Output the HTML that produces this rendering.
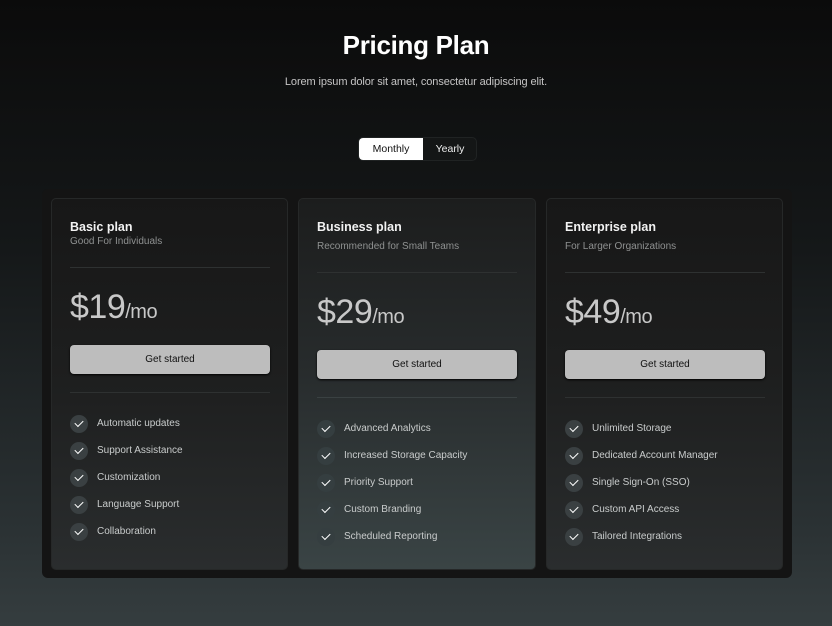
<!DOCTYPE html>
<html><head><meta charset="utf-8"><style>
*{margin:0;padding:0;box-sizing:border-box}
body{width:832px;height:626px;overflow:hidden;font-family:"Liberation Sans",sans-serif;background:linear-gradient(180deg,#0b0b0b 0%,#151819 40%,#2b3234 85%,#353d3f 100%);position:relative;color:#ddd}
.a{position:absolute;white-space:nowrap}
h1{position:absolute;top:30px;left:0;width:832px;text-align:center;font-size:26px;font-weight:bold;color:#fff;letter-spacing:-0.3px}
.sub{top:76px;left:0;width:832px;text-align:center;font-size:11px;color:#c4c4c4;letter-spacing:-0.1px}
.tog{left:358px;top:137px;width:119px;height:24px;border-radius:5px;background:#141616;border:1px solid #202323}
.tog .m{position:absolute;left:0;top:0;width:64px;height:22px;background:#fff;border-radius:4px 0 0 4px;color:#111;font-size:10.5px;text-align:center;line-height:22px}
.tog .y{position:absolute;left:64px;top:0;width:54px;height:22px;color:#eee;font-size:10.5px;text-align:center;line-height:22px}
.outer{left:42px;top:189px;width:750px;height:389px;background:#141414;border-radius:6px}
.card{position:absolute;top:198px;height:372px;border-radius:5px;border:1px solid #262828}
.c1{left:51px;width:237px;background:linear-gradient(180deg,#171717 0%,#1e1f1f 50%,#2a2d2e 100%)}
.c2{left:298px;width:238px;background:linear-gradient(180deg,#1c1d1d 0%,#272b2c 45%,#3a4445 100%)}
.c3{left:546px;width:237px;background:linear-gradient(180deg,#171717 0%,#1e1f1f 50%,#2a2d2e 100%)}
.t{left:18px;font-size:12.5px;font-weight:bold;color:#f2f2f2}
.s{left:18px;font-size:10px;color:#8f9191}
.hr{left:18px;width:200px;height:1px;background:#2e3131}
.p{left:18px;font-size:34px;color:#c8c8c8;letter-spacing:-0.5px}
.p span{font-size:20px}
.b{left:18px;width:200px;height:29px;background:#bdbdbd;border-radius:4px;color:#111;font-size:10px;text-align:center;line-height:29px;box-shadow:0 1px 2px #000}
.li{left:18px;font-size:10px;color:#c9cccc;height:18px;line-height:18px}
.li i{position:absolute;left:0;top:0;width:18px;height:18px;border-radius:50%;background:#3a4042}
.c2 .li i{background:#353e40}
.li i:after{content:"";position:absolute;left:5px;top:5px;width:7px;height:4px;border-left:1.5px solid #fff;border-bottom:1.5px solid #fff;transform:rotate(-45deg)}
.li b{font-weight:normal;position:absolute;left:27px;top:0}
</style></head><body>
<h1>Pricing Plan</h1>
<div class="a sub">Lorem ipsum dolor sit amet, consectetur adipiscing elit.</div>
<div class="a tog"><div class="m">Monthly</div><div class="y">Yearly</div></div>
<div class="a outer"></div>

<div class="card c1">
<div class="a t" style="top:21px">Basic plan</div>
<div class="a s" style="top:37px">Good For Individuals</div>
<div class="a hr" style="top:68px"></div>
<div class="a p" style="top:89px">$19<span>/mo</span></div>
<div class="a b" style="top:146px">Get started</div>
<div class="a hr" style="top:193px"></div>
<div class="a li" style="top:216px"><i></i><b>Automatic updates</b></div>
<div class="a li" style="top:243px"><i></i><b>Support Assistance</b></div>
<div class="a li" style="top:270px"><i></i><b>Customization</b></div>
<div class="a li" style="top:297px"><i></i><b>Language Support</b></div>
<div class="a li" style="top:324px"><i></i><b>Collaboration</b></div>
</div>

<div class="card c2">
<div class="a t" style="top:21px">Business plan</div>
<div class="a s" style="top:42px">Recommended for Small Teams</div>
<div class="a hr" style="top:73px"></div>
<div class="a p" style="top:94px">$29<span>/mo</span></div>
<div class="a b" style="top:151px">Get started</div>
<div class="a hr" style="top:198px;background:#3a4142"></div>
<div class="a li" style="top:221px"><i></i><b>Advanced Analytics</b></div>
<div class="a li" style="top:248px"><i></i><b>Increased Storage Capacity</b></div>
<div class="a li" style="top:275px"><i></i><b>Priority Support</b></div>
<div class="a li" style="top:302px"><i></i><b>Custom Branding</b></div>
<div class="a li" style="top:329px"><i></i><b>Scheduled Reporting</b></div>
</div>

<div class="card c3">
<div class="a t" style="top:21px">Enterprise plan</div>
<div class="a s" style="top:42px">For Larger Organizations</div>
<div class="a hr" style="top:73px"></div>
<div class="a p" style="top:94px">$49<span>/mo</span></div>
<div class="a b" style="top:151px">Get started</div>
<div class="a hr" style="top:198px"></div>
<div class="a li" style="top:221px"><i></i><b>Unlimited Storage</b></div>
<div class="a li" style="top:248px"><i></i><b>Dedicated Account Manager</b></div>
<div class="a li" style="top:275px"><i></i><b>Single Sign-On (SSO)</b></div>
<div class="a li" style="top:302px"><i></i><b>Custom API Access</b></div>
<div class="a li" style="top:329px"><i></i><b>Tailored Integrations</b></div>
</div>
</body></html>
